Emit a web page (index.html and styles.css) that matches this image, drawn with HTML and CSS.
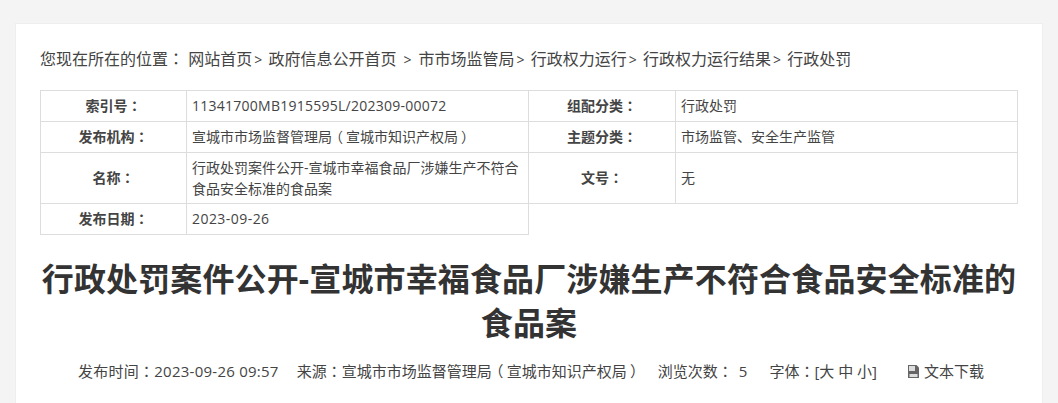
FILE: index.html
```html
<!DOCTYPE html>
<html>
<head>
	<meta charset="UTF-8">
	<title>行政处罚案件公开</title>
	<link rel="stylesheet" href="styles.css">
</head>
<body>
	<div class="card">
		<div class="crumbs">
			<span>您现在所在的位置<b class="colon">：</b></span>
			<a>网站首页</a><i>&gt;</i>
			<a>政府信息公开首页</a><i class="wide">&gt;</i>
			<a>市市场监管局</a><i>&gt;</i>
			<a>行政权力运行</a><i>&gt;</i>
			<a>行政权力运行结果</a><i>&gt;</i>
			<a>行政处罚</a>
		</div>
		<table class="info">
			<tr>
				<th>索引号<b class="colon">：</b></th>
				<td class="wide-cell num">11341700MB1915595L/202309-00072</td>
				<th>组配分类<b class="colon">：</b></th>
				<td>行政处罚</td>
			</tr>
			<tr>
				<th>发布机构<b class="colon">：</b></th>
				<td class="wide-cell">宣城市市场监督管理局<b class="paren">（</b>宣城市知识产权局<b class="paren">）</b></td>
				<th>主题分类<b class="colon">：</b></th>
				<td>市场监管、安全生产监管</td>
			</tr>
			<tr class="tall">
				<th>名称<b class="colon">：</b></th>
				<td class="wide-cell">行政处罚案件公开-宣城市幸福食品厂涉嫌生产不符合食品安全标准的食品案</td>
				<th>文号<b class="colon">：</b></th>
				<td>无</td>
			</tr>
			<tr>
				<th>发布日期<b class="colon">：</b></th>
				<td class="wide-cell date">2023-09-26</td>
			</tr>
		</table>
		<h1 class="title">行政处罚案件公开-宣城市幸福食品厂涉嫌生产不符合食品安全标准的食品案</h1>
		<div class="meta">
			<span class="num m-time">发布时间<b class="colon">：</b>2023-09-26 09:57</span>
			<span class="m-source">来源<b class="colon">：</b>宣城市市场监督管理局<b class="paren">（</b>宣城市知识产权局<b class="paren">）</b></span>
			<span class="m-views">浏览次数<b class="colon">：</b><em>5</em></span>
			<span class="m-font">字体<b class="colon">：</b>[大 中 小]</span>
			<span class="down">
				<svg class="down-icon" width="13" height="13" viewBox="0 0 13 13"><path d="M1 0h8.500L12 2.500V13H1z" fill="#666"/><path d="M2 1h6v5H2z" fill="#ddd"/><path d="M2.500 9h8v3h-8z" fill="#ddd"/></svg>
				文本下载
			</span>
		</div>
	</div>
</body>
</html>
```

FILE: styles.css
```css
html,
body {
	margin: 0;
	padding: 0;
	height: 403px;
	overflow: hidden;
	background: #f4f4f4;
}
body {
	font-family: "Open Sans", "Noto Sans CJK SC", sans-serif;
	color: #444;
}
.card {
	box-sizing: border-box;
	width: 1028px;
	height: 380px;
	margin: 23px auto 0;
	padding: 22px 24px 0;
	background: #fff;
	border: 1px solid #eee;
	border-bottom: 0;
}
.colon {
	font-family: "Noto Sans CJK TC", sans-serif;
	font-weight: inherit;
}
.paren {
	display: inline-block;
	font-weight: normal;
	text-align: center;
	width: 1em;
	font-feature-settings: "palt";
}
.num {
	letter-spacing: .25px;
}
.date {
	letter-spacing: .45px;
}
.crumbs {
	height: 24px;
	line-height: 24px;
	font-size: 16px;
	white-space: nowrap;
}
.crumbs i {
	font-style: normal;
	font-size: 14px;
	margin: 0 2px 0 2px;
}
.crumbs i.wide {
	margin: 0 3px 0 7px;
}
.info {
	width: 978px;
	margin-top: 20px;
	border-collapse: collapse;
	table-layout: fixed;
	font-size: 14px;
	line-height: 21px;
}
.info th,
.info td {
	padding: 4px 5px 5px;
	border: 1px solid #ddd;
	font-weight: normal;
	text-align: left;
}
.info .tall th,
.info .tall td {
	padding: 3px 5px 5px;
}
.info .tall .wide-cell {
	padding: 4px 5px;
}
.info th {
	width: 135px;
	font-weight: bold;
	text-align: center;
}
.info td + th {
	width: 136px;
}
.info .wide-cell {
	width: 331px;
}
.title {
	margin: 22px 0 0;
	font-size: 32px;
	line-height: 44px;
	font-weight: bold;
	letter-spacing: .13px;
	text-align: center;
	color: #333;
}
.meta {
	display: flex;
	margin-top: 15px;
	padding-left: 38px;
	font-size: 15px;
	line-height: 22px;
	white-space: nowrap;
}
.meta span {
	margin-right: 19px;
}
.meta .m-time {
	margin-right: 18px;
}
.meta .m-source {
	margin-right: 16px;
}
.meta .m-views {
	margin-right: 22px;
}
.meta em {
	margin-left: 6px;
	font-style: normal;
}
.meta .down {
	display: flex;
	align-items: center;
	gap: 4px;
	margin: 0 0 0 11px;
}
```
